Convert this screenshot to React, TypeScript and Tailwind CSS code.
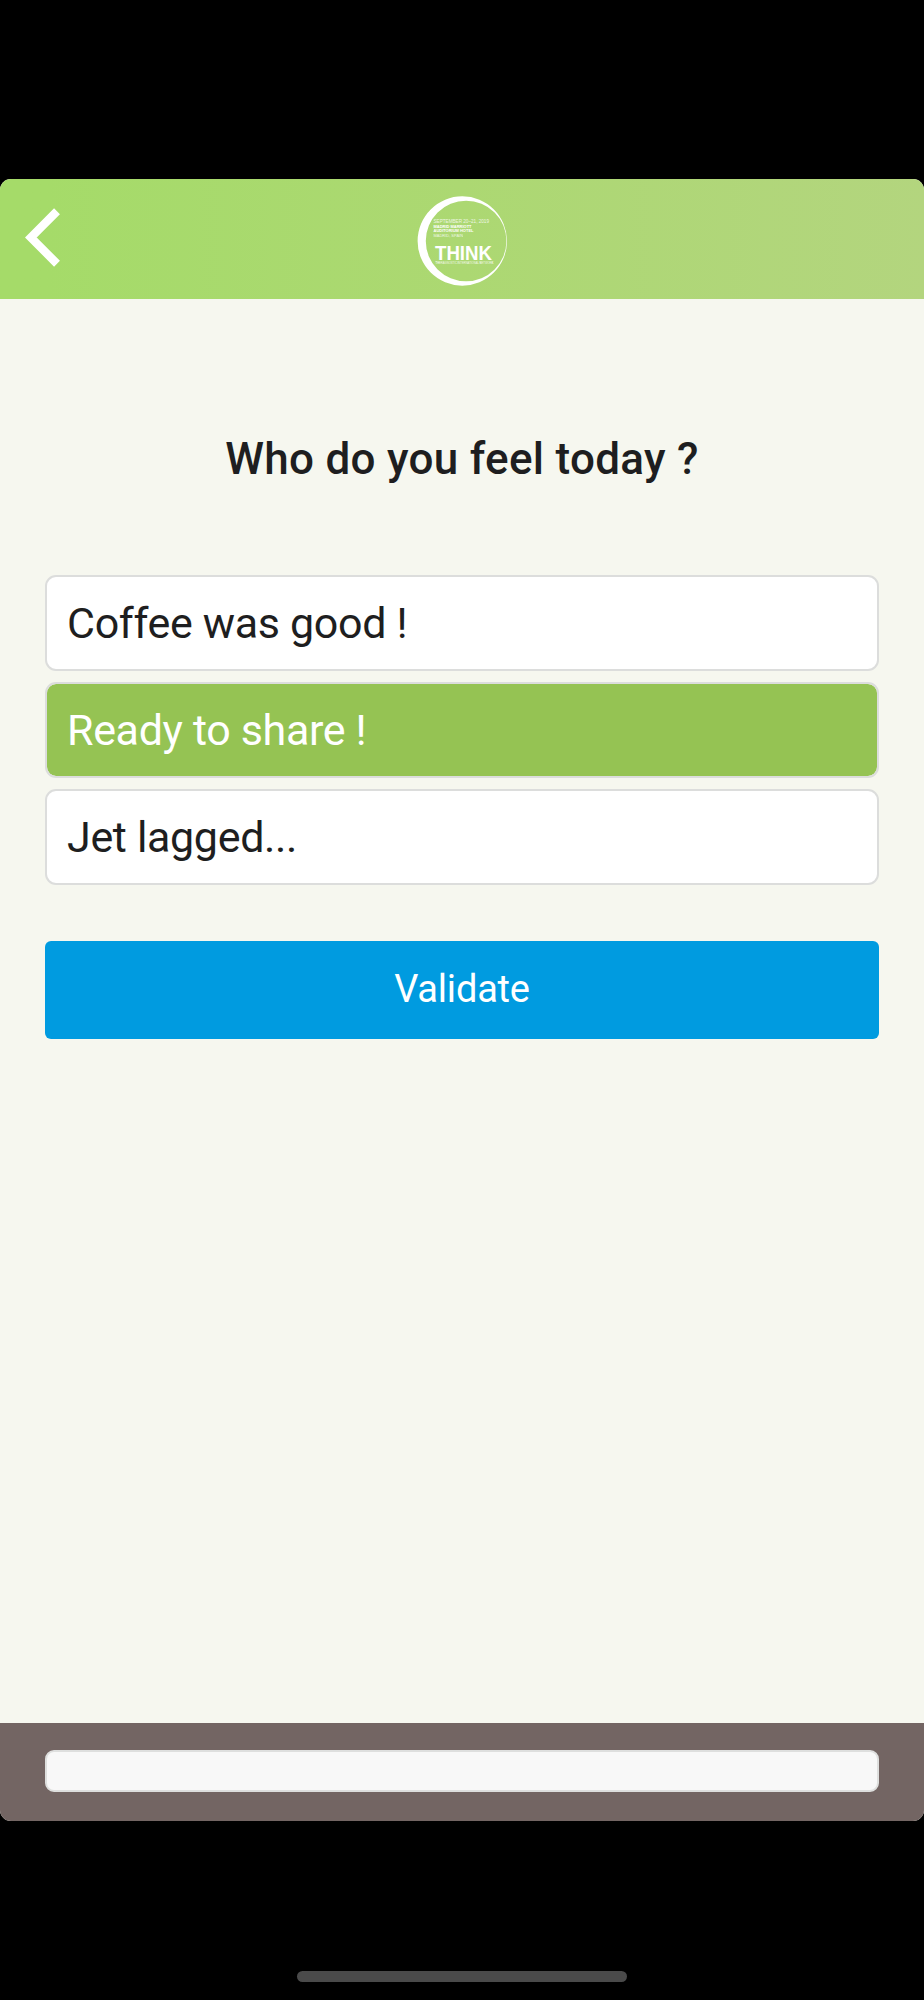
import { useState } from "react";

const ANSWERS = [
  { value: "coffee", label: "Coffee was good !" },
  { value: "ready", label: "Ready to share !" },
  { value: "jet_lagged", label: "Jet lagged..." }
] as const;

function ThinkLogo() {
  return (
    <svg
      viewBox="0 0 90 90"
      className="h-[90px] w-[90px] font-['Liberation_Sans',Arial,sans-serif]"
      fill="white"
      role="img"
      aria-label="THINK"
    >
      <path
        fillRule="evenodd"
        d="M45.3 .3a44.7 44.7 0 1 0 0 89.4a44.7 44.7 0 1 0 0-89.4ZM49.1 4.7a40.3 40.3 0 1 1 0 80.6a40.3 40.3 0 1 1 0-80.6Z"
      />
      <text x="16.5" y="26.7" fontSize="5" opacity="0.8" textLength="55.5" lengthAdjust="spacingAndGlyphs">
        SEPTEMBER 20–21, 2019
      </text>
      <text x="16.5" y="32" fontSize="4.4" fontWeight="bold" textLength="38" lengthAdjust="spacingAndGlyphs">
        MADRID MARRIOTT
      </text>
      <text x="16.5" y="36.4" fontSize="4.4" fontWeight="bold" textLength="40" lengthAdjust="spacingAndGlyphs">
        AUDITORIUM HOTEL
      </text>
      <text x="16.5" y="41" fontSize="4.4" opacity="0.8" textLength="29.5" lengthAdjust="spacingAndGlyphs">
        MADRID, SPAIN
      </text>
      <text x="18" y="63.8" fontSize="19.3" fontWeight="bold" textLength="57" lengthAdjust="spacingAndGlyphs">
        THINK
      </text>
      <text x="18.5" y="68.4" fontSize="2.8" opacity="0.85" textLength="58" lengthAdjust="spacingAndGlyphs">
        <tspan fontWeight="bold">TH</tspan>ERAGNOSTIC <tspan fontWeight="bold">I</tspan>NTERNATIONAL{" "}
        <tspan fontWeight="bold">N</tspan>ETWOR<tspan fontWeight="bold">K</tspan>
      </text>
    </svg>
  );
}

function Header() {
  return (
    <header className="grid h-[120.5px] shrink-0 grid-cols-3 items-center bg-linear-to-r from-[#a5db69] from-5% via-[#acd872] via-50% to-[#b3d57e]">
      <button type="button" aria-label="Back" className="ml-[25px] w-9 -translate-y-[1.5px]">
        <svg viewBox="0 0 36 60" className="h-[60px] w-9" fill="none" stroke="white" strokeWidth="8.3">
          <path d="M32 3.8L5.8 30L32 56.2" />
        </svg>
      </button>
      <div className="flex translate-y-[2px] justify-center">
        <ThinkLogo />
      </div>
    </header>
  );
}

export default function App() {
  const [selected, setSelected] = useState<string>("ready");
  const [message, setMessage] = useState("");

  return (
    <div className="flex h-[2000px] w-[924px] flex-col bg-black pt-[178.5px] font-[Roboto,sans-serif] text-[#1e1e20]">
      <div className="flex h-[1642.5px] shrink-0 flex-col overflow-hidden rounded-[11px] bg-[#f6f7ef]">
        <Header />
        <main className="flex flex-1 flex-col px-[45px] pt-[132px]">
          <h1 className="text-center text-[44px] leading-[56px] font-medium tracking-[0.28px]">
            Who do you feel today ?
          </h1>
          <div className="mt-[88px] flex flex-col gap-[11px]">
            {ANSWERS.map((answer) => (
              <button
                key={answer.value}
                type="button"
                onClick={() => setSelected(answer.value)}
                className={`flex h-24 items-center rounded-[11px] border-2 border-[#dcdddc] px-5 text-left text-[43px] tracking-[-0.34px] ${
                  answer.value === selected ? "bg-[#95c353] bg-clip-padding text-white" : "bg-white"
                }`}
              >
                {answer.label}
              </button>
            ))}
          </div>
          <button
            type="submit"
            className="mt-14 flex h-[98px] items-center justify-center rounded-[6px] bg-[#009be0] pb-[2px] text-[38px] tracking-[-0.2px] text-white"
          >
            Validate
          </button>
        </main>
        <footer className="h-[98px] shrink-0 bg-[#736563] px-[45px] pt-[27px]">
          <input
            value={message}
            onChange={(e) => setMessage(e.target.value)}
            aria-label="Message"
            className="block h-[42px] w-full rounded-[9px] border-2 border-[#dedfde] bg-[#f8f8f8] px-4 text-2xl outline-none"
          />
        </footer>
      </div>
      <div className="mx-auto mt-[150px] h-[11px] w-[330px] shrink-0 rounded-full bg-[#4a4a4a]" />
    </div>
  );
}
